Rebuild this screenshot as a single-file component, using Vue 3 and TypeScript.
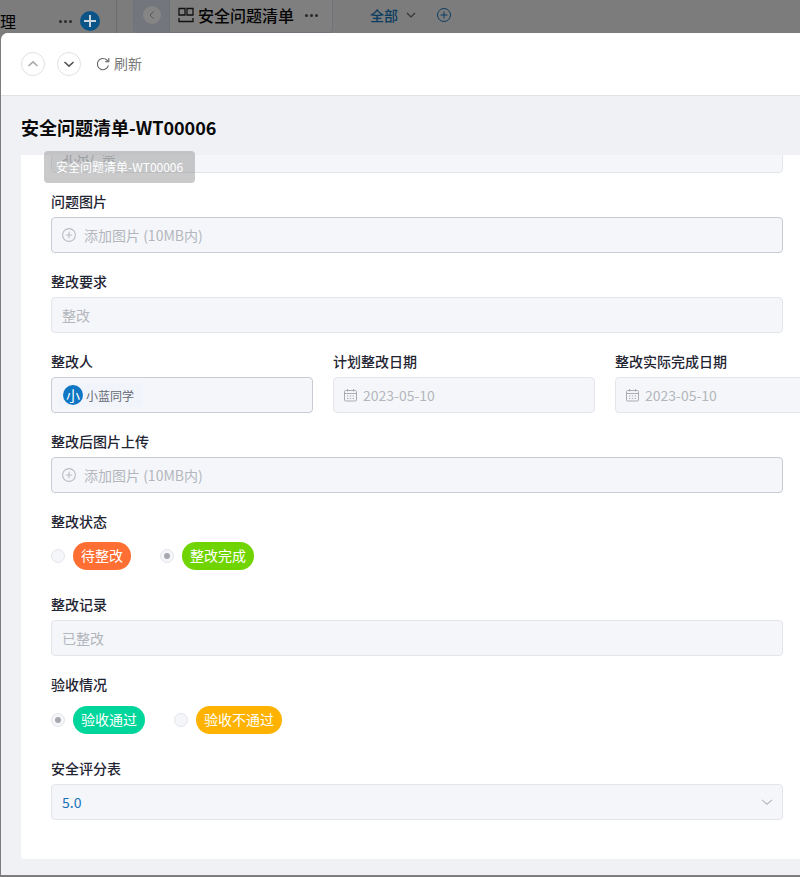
<script setup lang="ts">
interface Choice { text: string; color: string; checked: boolean }
const statusChoices: Choice[] = [
  { text: '待整改', color: '#ff6f33', checked: false },
  { text: '整改完成', color: '#70d400', checked: true },
]
const acceptChoices: Choice[] = [
  { text: '验收通过', color: '#00d69b', checked: true },
  { text: '验收不通过', color: '#ffb300', checked: false },
]
const dates = [
  { label: '计划整改日期', value: '2023-05-10' },
  { label: '整改实际完成日期', value: '2023-05-10' },
]
</script>

<template>
  <div class="page">
    <header class="topbar">
      <div class="side">
        <span class="side-title">理</span>
        <span class="dots side-dots">
          <i></i><i></i><i></i>
        </span>
        <span class="add-round">
          <svg width="20" height="20" viewBox="0 0 20 20"><path d="M10 4v12M4 10h12" stroke="#c9d4dc" stroke-width="2" fill="none" /></svg>
        </span>
      </div>
      <div class="tab">
        <span class="tab-back">
          <span class="back-circle">
            <svg width="10" height="10" viewBox="0 0 10 10"><path d="M6.5 1.5 3 5l3.5 3.5" stroke="#555" stroke-width="1" fill="none" /></svg>
          </span>
        </span>
        <span class="tab-main">
          <svg width="16" height="16" viewBox="0 0 16 16" fill="none" stroke="#111" stroke-width="1.3"><path d="M1 1.5h6V8H1zM9 1.5h6V8H9zM1 11v3.5h14V11" /></svg>
          <span class="tab-title">安全问题清单</span>
          <span class="dots tab-dots">
            <i></i><i></i><i></i>
          </span>
        </span>
      </div>
      <div class="view">
        <span class="view-name">全部</span>
        <svg width="10" height="10" viewBox="0 0 10 10"><path d="M1 3l4 4 4-4" stroke="#333" stroke-width="1.1" fill="none" /></svg>
        <svg class="view-add" width="16" height="16" viewBox="0 0 16 16" fill="none" stroke="#0b3c61" stroke-width="1"><circle cx="8" cy="8" r="6.5" /><path d="M8 4.5v7M4.5 8h7" /></svg>
      </div>
    </header>

    <section class="modal">
      <div class="toolbar">
        <button class="nav-btn" type="button">
          <svg width="14" height="14" viewBox="0 0 14 14"><path d="M2.5 9 7 4.8 11.5 9" stroke="#a9a9a9" stroke-width="1.6" fill="none" /></svg>
        </button>
        <button class="nav-btn" type="button">
          <svg width="14" height="14" viewBox="0 0 14 14"><path d="M2.5 5 7 9.2 11.5 5" stroke="#555" stroke-width="1.6" fill="none" /></svg>
        </button>
        <span class="refresh">
          <svg class="refresh-icon" width="14" height="14" viewBox="0 0 14 14" fill="none" stroke="#666" stroke-width="1.1"><path d="M12.4 8.4A5.6 5.6 0 1 1 10.8 3L12.6 4.8" /><path d="M12.8 1v3.8H9" /></svg>
          <span>刷新</span>
        </span>
      </div>

      <div class="body">
        <h1 class="title">安全问题清单-WT00006</h1>
        <div class="card">
          <div class="scroll">
            <div class="input clipped"><span class="muted dark">北京/&nbsp;&nbsp;崇</span></div>

            <div class="field">
              <label class="label">问题图片</label>
              <div class="input strong">
                <svg class="plus" width="14" height="14" viewBox="0 0 14 14" fill="none" stroke="#b9bcc4" stroke-width="1.1"><circle cx="7" cy="7" r="6.4" /><path d="M7 3.8v6.4M3.8 7h6.4" /></svg>
                <span class="muted">添加图片 (10MB内)</span>
              </div>
            </div>

            <div class="field">
              <label class="label">整改要求</label>
              <div class="input"><span class="muted">整改</span></div>
            </div>

            <div class="date-row">
              <div class="col">
                <label class="label">整改人</label>
                <div class="input strong person-input">
                  <span class="person">
                    <span class="avatar">小</span>
                    <span class="person-name">小蓝同学</span>
                  </span>
                </div>
              </div>
              <div v-for="d in dates" :key="d.label" class="col">
                <label class="label">{{ d.label }}</label>
                <div class="input">
                  <svg class="cal" width="13" height="14" viewBox="0 0 13 14" fill="none" stroke="#a8abb3" stroke-width="1"><rect x="0.5" y="2.5" width="12" height="10.5" rx="1" /><path d="M0.5 5.5h12M3.5 1v2.5M9.5 1v2.5M3 8h1.4M5.8 8h1.4M8.6 8H10M3 10.5h1.4M5.8 10.5h1.4M8.6 10.5H10" /></svg>
                  <span class="muted">{{ d.value }}</span>
                </div>
              </div>
            </div>

            <div class="field">
              <label class="label">整改后图片上传</label>
              <div class="input strong">
                <svg class="plus" width="14" height="14" viewBox="0 0 14 14" fill="none" stroke="#b9bcc4" stroke-width="1.1"><circle cx="7" cy="7" r="6.4" /><path d="M7 3.8v6.4M3.8 7h6.4" /></svg>
                <span class="muted">添加图片 (10MB内)</span>
              </div>
            </div>

            <div class="field choice-field">
              <label class="label">整改状态</label>
              <div class="radios">
                <span v-for="c in statusChoices" :key="c.text" class="radio-item">
                  <span class="radio" :class="{ on: c.checked }"></span>
                  <span class="pill" :style="{ background: c.color }">{{ c.text }}</span>
                </span>
              </div>
            </div>

            <div class="field after-radio">
              <label class="label">整改记录</label>
              <div class="input"><span class="muted">已整改</span></div>
            </div>

            <div class="field choice-field">
              <label class="label">验收情况</label>
              <div class="radios lower">
                <span v-for="c in acceptChoices" :key="c.text" class="radio-item">
                  <span class="radio" :class="{ on: c.checked }"></span>
                  <span class="pill" :style="{ background: c.color }">{{ c.text }}</span>
                </span>
              </div>
            </div>

            <div class="field after-radio">
              <label class="label">安全评分表</label>
              <div class="input select">
                <span class="score">5.0</span>
                <svg width="12" height="12" viewBox="0 0 12 12"><path d="M1 3.8 6 8.2l5-4.4" stroke="#b5b8bf" stroke-width="1.1" fill="none" /></svg>
              </div>
            </div>
          </div>
        </div>
      </div>

      <div class="tooltip">安全问题清单-WT00006</div>
    </section>
  </div>
</template>

<style>
html, body { margin: 0; background: #6f6f6f; }
</style>

<style scoped>
.page {
  width: 800px;
  height: 877px;
  overflow: hidden;
  background: #7c7c7c;
  font-family: "Noto Sans CJK SC", "Noto Sans", sans-serif;
  font-size: 14px;
  position: relative;
}
.topbar {
  height: 33px;
  display: flex;
  align-items: flex-start;
}
.side {
  width: 116px;
  height: 33px;
  display: flex;
  align-items: flex-start;
  border-right: 1px solid #6e6e6e;
}
.side-title { font-size: 16px; color: #000; line-height: 16px; margin-top: 13px; }
.dots { display: flex; gap: 2px; }
.dots i { width: 3px; height: 3px; border-radius: 50%; background: #2b2b2b; display: block; }
.side-dots { margin: 20px 0 0 43px; }
.add-round {
  width: 20px;
  height: 20px;
  border-radius: 50%;
  background: #0b5488;
  margin: 11px 0 0 8px;
  display: flex;
}
.tab {
  margin-left: 16px;
  width: 200px;
  height: 33px;
  display: flex;
  border: 1px solid #70747a;
  border-top: 0;
  border-radius: 0 0 4px 4px;
  box-sizing: border-box;
  background: #7f7f7f;
  overflow: hidden;
}
.tab-back {
  width: 36px;
  background: #73767d;
  display: flex;
  justify-content: center;
  padding-top: 6px;
  box-sizing: border-box;
  border-right: 1px solid #6f7378;
}
.back-circle {
  width: 18px;
  height: 18px;
  border-radius: 50%;
  background: #858585;
  display: flex;
  align-items: center;
  justify-content: center;
}
.tab-main {
  flex: 1;
  display: flex;
  align-items: flex-start;
  padding: 7px 0 0 8px;
  gap: 4px;
}
.tab-title { font-size: 16px; line-height: 17px; color: #050505; font-weight: 500; }
.tab-dots { margin: 7px 0 0 7px; }
.view {
  display: flex;
  align-items: center;
  height: 30px;
  margin-left: 37px;
}
.view-name { font-size: 14px; font-weight: 500; color: #0b3c61; margin-right: 8px; }
.view-add { margin-left: 20px; }

.modal {
  position: relative;
  margin-left: 1px;
  width: 900px;
  height: 842px;
  background: #f0f1f5;
  border-radius: 7px 0 0 0;
  overflow: hidden;
}
.toolbar {
  height: 63px;
  box-sizing: border-box;
  background: #fff;
  border-bottom: 1px solid #e1e2e6;
  display: flex;
  align-items: center;
  padding-left: 20px;
}
.nav-btn {
  width: 24px;
  height: 24px;
  padding: 0;
  border: 1px solid #e0e0e6;
  border-radius: 50%;
  background: #fff;
  display: flex;
  align-items: center;
  justify-content: center;
  margin-right: 12px;
}
.refresh {
  display: flex;
  align-items: center;
  gap: 4px;
  color: #777;
  font-size: 14px;
  line-height: 20px;
  margin: -2px 0 0 3px;
}
.refresh-icon { margin-top: 1px; }
.body { padding: 0 0 16px 20px; }
.title {
  margin: 0;
  height: 59px;
  line-height: 62px;
  font-size: 18px;
  font-weight: 700;
  color: #0a0a0a;
}
.card {
  background: #fff;
  height: 704px;
  overflow: hidden;
  border-radius: 0 0 4px 4px;
}
.scroll {
  margin-top: -18px;
  padding: 0 30px;
  width: 732px;
}
.clipped { margin-bottom: 19px; }
.field { margin-bottom: 19px; }
.choice-field { margin-bottom: 0; }
.after-radio { margin-top: 25px; }
.label {
  display: block;
  height: 20px;
  line-height: 19px;
  font-size: 14px;
  font-weight: 500;
  color: #1f2533;
  margin-bottom: 5px;
  white-space: nowrap;
}
.input {
  height: 36px;
  box-sizing: border-box;
  border: 1px solid #e3e5ea;
  border-radius: 4px;
  background: #f5f6fa;
  display: flex;
  align-items: center;
  padding: 0 10px;
  font-size: 14px;
}
.strong { border-color: #c8cbd4; }
.muted { color: #b3b6bd; line-height: 31px; }
.dark { color: #a0a3aa; }
.plus { margin-right: 8px; }
.date-row {
  display: grid;
  grid-template-columns: repeat(3, 262px);
  gap: 20px;
  margin-bottom: 19px;
}
.cal { margin-right: 6px; }
.person-input { padding-left: 6px; }
.person {
  display: flex;
  align-items: center;
  height: 24px;
  padding: 0 9px 0 5px;
  background: #f2f4fb;
  border-radius: 4px;
  gap: 3px;
}
.avatar {
  width: 20px;
  height: 20px;
  border-radius: 50%;
  background: #0f76c4;
  color: #fff;
  font-size: 14px;
  display: flex;
  align-items: center;
  justify-content: center;
}
.person-name { font-size: 12px; color: #666a73; }
.radios {
  display: flex;
  padding-top: 5px;
  gap: 29px;
  height: 28px;
}
.lower { padding-top: 6px; }
.radio-item { display: flex; align-items: center; gap: 8px; }
.radio {
  width: 14px;
  height: 14px;
  box-sizing: border-box;
  border: 1px solid #e3e5ea;
  border-radius: 50%;
  background: #f5f6fa;
  display: flex;
  align-items: center;
  justify-content: center;
}
.radio.on::after {
  content: "";
  width: 6px;
  height: 6px;
  border-radius: 50%;
  background: #a6a8b0;
}
.pill {
  height: 28px;
  line-height: 27px;
  padding: 0 8px;
  border-radius: 14px;
  color: #fff;
  font-size: 14px;
  white-space: nowrap;
}
.select { justify-content: space-between; padding-right: 9px; }
.score { color: #1a73b8; font-size: 14px; line-height: 31px; }
.tooltip {
  position: absolute;
  left: 43px;
  top: 118px;
  height: 32px;
  line-height: 32px;
  padding: 0 12px;
  border-radius: 4px;
  background: rgba(150, 150, 150, 0.5);
  color: #fff;
  font-size: 12px;
  white-space: nowrap;
}
</style>
